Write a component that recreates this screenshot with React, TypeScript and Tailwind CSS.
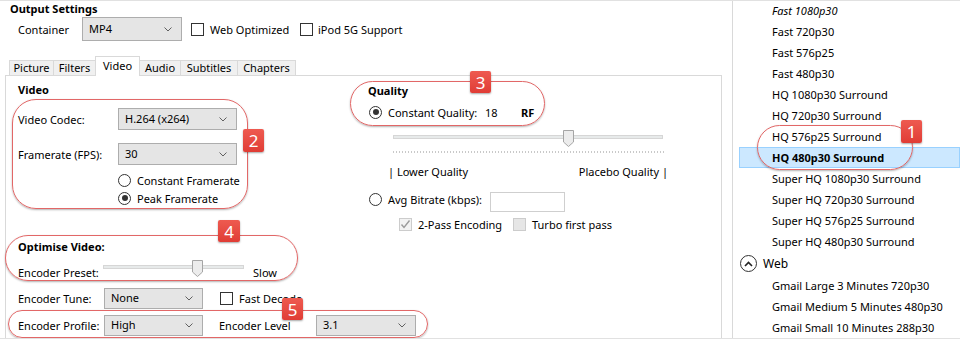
import React from 'react';

// Small building blocks that imitate the Windows 10 form controls

function Chevron() {
  return (
    <svg width="8" height="5" viewBox="0 0 8 5" className="shrink-0">
      <path d="M0.5 0.5 L4 4 L7.5 0.5" fill="none" stroke="#606060" strokeWidth="1" />
    </svg>
  );
}

function Select({ value, className }: { value: string; className: string }) {
  return (
    <div
      className={`flex items-center justify-between bg-[#e5e5e5] border border-[#adadad] pl-[6px] pr-[9px] ${className}`}
    >
      <span className="-mt-[2px]">{value}</span>
      <Chevron />
    </div>
  );
}

function Checkbox({ checked, disabled }: { checked?: boolean; disabled?: boolean }) {
  const box = disabled
    ? checked
      ? 'bg-[#f2f2f2] border-[#cccccc]'
      : 'bg-[#e6e6e6] border-[#cccccc]'
    : 'bg-white border-[#333333]';
  return (
    <div className={`w-[13px] h-[13px] border shrink-0 flex items-center justify-center ${box}`}>
      {checked && (
        <svg width="11" height="11" viewBox="0 0 11 11">
          <path d="M1.5 5.5 L4 8.5 L9.5 1.5" fill="none" stroke="#9a9a9a" strokeWidth="1.4" />
        </svg>
      )}
    </div>
  );
}

function Radio({ checked }: { checked?: boolean }) {
  return (
    <div className="w-[13px] h-[13px] rounded-full border border-[#333333] bg-white shrink-0 flex items-center justify-center">
      {checked && <div className="w-[6px] h-[6px] rounded-full bg-[#333333]" />}
    </div>
  );
}

function Thumb() {
  return (
    <svg width="11" height="17" viewBox="0 0 11 17">
      <path d="M0.5 0.5 H10.5 V12 L5.5 16.5 L0.5 12 Z" fill="#ececec" stroke="#a5a5a5" strokeWidth="1" />
    </svg>
  );
}

function Callout({ className, radius }: { className: string; radius: string }) {
  return (
    <div
      className={`absolute z-20 border-[1.5px] border-[#e26767] shadow-[0_1px_2px_rgba(0,0,0,0.3)] pointer-events-none ${radius} ${className}`}
    />
  );
}

function Badge({ n, className }: { n: string; className: string }) {
  return (
    <div
      className={`absolute z-30 bg-gradient-to-b from-[#ee5a50] to-[#e03c35] rounded-[2px] shadow-[0_1px_2px_rgba(0,0,0,0.35)] text-white text-[17px] leading-none flex items-center justify-center ${className}`}
    >
      {n}
    </div>
  );
}

const tabs = [
  { name: 'Picture', w: 'w-[45px]' },
  { name: 'Filters', w: 'w-[43px]' },
  { name: 'Video', w: 'w-[45px]' },
  { name: 'Audio', w: 'w-[42px]' },
  { name: 'Subtitles', w: 'w-[58px]' },
  { name: 'Chapters', w: 'w-[59px]' },
];

const presets = [
  'Super HQ 1080p30 Surround',
  'Super HQ 720p30 Surround',
  'Super HQ 576p25 Surround',
  'Super HQ 480p30 Surround',
];

const gmail = [
  'Gmail Large 3 Minutes 720p30',
  'Gmail Medium 5 Minutes 480p30',
  'Gmail Small 10 Minutes 288p30',
];

function PresetRow({ children, italic }: { children: React.ReactNode; italic?: boolean }) {
  return (
    <div className={`h-[21px] shrink-0 flex items-center pl-[39px] ${italic ? 'italic' : ''}`}>
      {children}
    </div>
  );
}

export default function App() {
  return (
    <div className="relative w-[960px] h-[339px] overflow-hidden bg-white text-black text-[11px] leading-none font-['Noto_Sans',sans-serif] flex border-t border-b border-[#e1e1e1]">
      {/* Left: output settings */}
      <div className="w-[733px] shrink-0 border-r border-[#d9d9d9] flex flex-col">
        <div className="h-[14px] pl-[10px] flex items-center font-bold">Output Settings</div>

        <div className="mt-[2px] h-[24px] flex items-center">
          <span className="w-[82px] pl-[18px]">Container</span>
          <Select value="MP4" className="w-[100px] h-[24px]" />
          <div className="ml-[9px] w-[109px] flex items-center">
            <Checkbox />
            <span className="ml-[6px]">Web Optimized</span>
          </div>
          <div className="flex items-center">
            <Checkbox />
            <span className="ml-[5px]">iPod 5G Support</span>
          </div>
        </div>

        {/* Tabs */}
        <div className="mt-[15px] h-[19px] pl-[10px] flex items-end">
          {tabs.map((t) =>
            t.name === 'Video' ? (
              <div
                key={t.name}
                className={`${t.w} h-[20px] -mb-px -ml-px relative z-10 bg-white border border-b-0 border-[#d9d9d9] flex items-center justify-center pb-[2px]`}
              >
                {t.name}
              </div>
            ) : (
              <div
                key={t.name}
                className={`${t.w} h-[15px] -ml-px bg-[#f0f0f0] border border-b-0 border-[#d9d9d9] flex items-center justify-center pb-[1px]`}
              >
                {t.name}
              </div>
            )
          )}
        </div>

        {/* Tab panel */}
        <div className="ml-[5px] w-[717px] flex-1 border border-b-0 border-[#d9d9d9] flex flex-col">
          <div className="h-[156px] flex">
            {/* Video column */}
            <div className="w-[350px] pl-[12px] flex flex-col">
              <div className="mt-[5px] h-[16px] flex items-center font-bold">Video</div>
              <div className="mt-[11px] h-[22px] flex items-center">
                <span className="w-[100px]">Video Codec:</span>
                <Select value="H.264 (x264)" className="w-[119px] h-[22px]" />
              </div>
              <div className="mt-[13px] h-[22px] flex items-center">
                <span className="w-[100px]">Framerate (FPS):</span>
                <Select value="30" className="w-[119px] h-[22px]" />
              </div>
              <div className="mt-[6px] h-[18px] pl-[100px] flex items-center">
                <Radio />
                <span className="ml-[6px]">Constant Framerate</span>
              </div>
              <div className="h-[18px] pl-[100px] flex items-center">
                <Radio checked />
                <span className="ml-[6px]">Peak Framerate</span>
              </div>
            </div>

            {/* Quality column */}
            <div className="pl-[12px] flex flex-col">
              <div className="mt-[6px] h-[16px] flex items-center font-bold">Quality</div>
              <div className="mt-[5px] h-[18px] flex items-center">
                <div className="ml-[1px]">
                  <Radio checked />
                </div>
                <span className="ml-[6px] w-[97px]">Constant Quality:</span>
                <span className="w-[36px]">18</span>
                <span className="font-bold">RF</span>
              </div>
              <div className="mt-[9px] ml-[25px] w-[270px] h-[17px] relative">
                <div className="absolute left-0 right-0 top-[5px] h-[4px] bg-[#e7eaea] border border-[#d6d6d6]" />
                <div className="absolute left-[170px] top-0">
                  <Thumb />
                </div>
              </div>
              <div className="mt-[4px] ml-[25px] w-[271px] h-[2px] bg-[repeating-linear-gradient(to_right,#c9c9c9_0_1px,transparent_1px_3px)]" />
              <div className="mt-[10px] ml-[20px] w-[280px] h-[16px] flex items-center justify-between">
                <span>| Lower Quality</span>
                <span>Placebo Quality |</span>
              </div>
              <div className="mt-[13px] h-[20px] flex items-start">
                <div className="ml-[1px] h-[14px] flex items-center">
                  <Radio />
                  <span className="ml-[6px] w-[102px]">Avg Bitrate (kbps):</span>
                </div>
                <div className="w-[75px] h-[20px] border border-[#cfcfcf] bg-white" />
              </div>
              <div className="mt-[4px] h-[16px] flex items-center">
                <div className="ml-[31px] w-[114px] flex items-center">
                  <Checkbox checked disabled />
                  <span className="ml-[6px]">2-Pass Encoding</span>
                </div>
                <Checkbox disabled />
                <span className="ml-[6px]">Turbo first pass</span>
              </div>
            </div>
          </div>

          {/* Optimise video */}
          <div className="pl-[12px] flex flex-col">
            <div className="mt-[6px] h-[16px] flex items-center font-bold">Optimise Video:</div>
            <div className="h-[26px] flex items-start">
              <span className="mt-[10px] h-[16px] w-[85px] flex items-center">Encoder Preset:</span>
              <div className="mt-[6px] w-[141px] h-[17px] relative">
                <div className="absolute left-0 right-0 top-[5px] h-[4px] bg-[#e7eaea] border border-[#d6d6d6]" />
                <div className="absolute left-[89px] top-0">
                  <Thumb />
                </div>
              </div>
              <span className="mt-[10px] ml-[9px] h-[16px] flex items-center">Slow</span>
            </div>
            <div className="mt-[8px] h-[21px] flex items-center">
              <span className="w-[86px]">Encoder Tune:</span>
              <Select value="None" className="w-[99px] h-[21px]" />
              <div className="ml-[17px]">
                <Checkbox />
              </div>
              <span className="ml-[6px]">Fast Decode</span>
            </div>
            <div className="mt-[6px] h-[21px] flex items-center">
              <span className="w-[86px]">Encoder Profile:</span>
              <Select value="High" className="w-[99px] h-[21px]" />
              <span className="ml-[16px] w-[97px]">Encoder Level</span>
              <Select value="3.1" className="w-[100px] h-[21px]" />
            </div>
          </div>
        </div>
      </div>

      {/* Right: preset list */}
      <div className="flex-1 flex flex-col -mt-px">
        <PresetRow italic>Fast 1080p30</PresetRow>
        <PresetRow>Fast 720p30</PresetRow>
        <PresetRow>Fast 576p25</PresetRow>
        <PresetRow>Fast 480p30</PresetRow>
        <PresetRow>HQ 1080p30 Surround</PresetRow>
        <PresetRow>HQ 720p30 Surround</PresetRow>
        <PresetRow>HQ 576p25 Surround</PresetRow>
        <div className="h-[21px] shrink-0 ml-[6px] pl-[32px] flex items-center bg-[#cce8ff] border border-[#99d1ff] font-bold">
          HQ 480p30 Surround
        </div>
        {presets.map((p) => (
          <PresetRow key={p}>{p}</PresetRow>
        ))}
        <div className="h-[23px] shrink-0 flex items-center pl-[7px]">
          <div className="w-[17px] h-[17px] rounded-full border-[1.5px] border-[#333333] flex items-center justify-center">
            <svg width="9" height="6" viewBox="0 0 9 6">
              <path d="M1 5 L4.5 1.5 L8 5" fill="none" stroke="#222222" strokeWidth="1.6" />
            </svg>
          </div>
          <span className="ml-[6px] text-[12px]">Web</span>
        </div>
        {gmail.map((g) => (
          <PresetRow key={g}>{g}</PresetRow>
        ))}
      </div>

      {/* Annotation callouts */}
      <Callout className="left-[757px] top-[124px] w-[156px] h-[45px]" radius="rounded-full" />
      <Badge n="1" className="left-[901px] top-[119px] w-[21px] h-[23px]" />
      <Callout className="left-[12px] top-[98px] w-[236px] h-[110px]" radius="rounded-[24px]" />
      <Badge n="2" className="left-[243px] top-[128px] w-[21px] h-[23px]" />
      <Callout className="left-[350px] top-[80px] w-[195px] h-[45px]" radius="rounded-full" />
      <Badge n="3" className="left-[470px] top-[70px] w-[21px] h-[22px]" />
      <Callout className="left-[5px] top-[234px] w-[293px] h-[46px]" radius="rounded-full" />
      <Badge n="4" className="left-[218px] top-[219px] w-[22px] h-[22px]" />
      <Callout className="left-[8px] top-[309px] w-[420px] h-[28px]" radius="rounded-full" />
      <Badge n="5" className="left-[282px] top-[297px] w-[21px] h-[22px]" />
    </div>
  );
}
